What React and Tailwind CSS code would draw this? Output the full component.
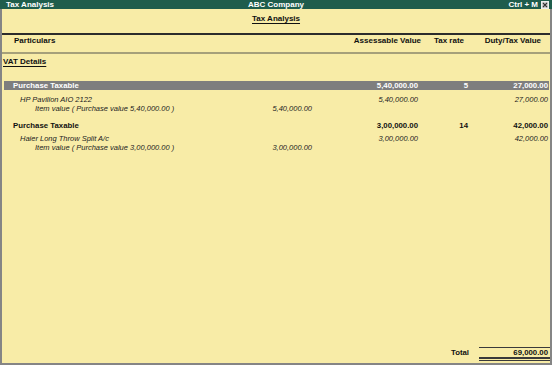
import React from "react";

const FONT = { fontFamily: '"Liberation Sans", Arial, sans-serif' };

function Cells({ a, r, d }) {
  return (
    <>
      <div className="w-[100px] shrink-0 text-right pr-[3px]">{a}</div>
      <div className="w-[47px] shrink-0 text-right">{r}</div>
      <div className="w-[80px] shrink-0 text-right">{d}</div>
    </>
  );
}

function CloseIcon() {
  return (
    <svg width="8" height="8" viewBox="0 0 8 8" className="block">
      <rect x="0.5" y="0.5" width="7" height="7" fill="#d0d0d0" stroke="#eeeeee" strokeWidth="1" />
      <path d="M2 2 L6 6 M6 2 L2 6" stroke="#333" strokeWidth="1.1" />
    </svg>
  );
}

export default function App() {
  return (
    <div
      style={FONT}
      className="w-[552px] h-[365px] flex flex-col overflow-hidden bg-[#f8eca7] text-[#111111]"
    >
      {/* Title bar */}
      <div className="h-[9px] shrink-0 bg-[#1f5d4c] text-white text-[8px] font-bold leading-[9px] relative flex items-center">
        <span className="pl-[6px]">Tax Analysis</span>
        <span className="absolute left-0 right-0 text-center pointer-events-none">ABC Company</span>
        <div className="ml-auto flex items-center gap-[3px] pr-[3px]">
          <span>Ctrl + M</span>
          <CloseIcon />
        </div>
      </div>

      {/* Body */}
      <div className="flex-1 flex flex-col border-l-2 border-r-2 border-b-2 border-[#858585] text-[8px]">
        {/* Report title */}
        <div className="h-[24px] shrink-0 pt-[5px] leading-[9px] text-center font-bold">
          <span className="underline underline-offset-[1.5px]">Tax Analysis</span>
        </div>

        {/* Column header */}
        <div className="flex pr-[2px] h-[21px] pt-[1px] leading-[9px] font-bold border-t-2 border-b-2 border-t-[#2c2c2c] border-b-[#a6a07a]">
          <div className="flex-1 pl-[12px]">Particulars</div>
          <div className="w-[100px] shrink-0 text-right">Assessable Value</div>
          <div className="w-[47px] shrink-0 text-right pr-[4px]">Tax rate</div>
          <div className="w-[80px] shrink-0 text-right pr-[7px]">Duty/Tax Value</div>
        </div>

        {/* VAT Details */}
        <div className="pt-[3px] pl-[1px] leading-[9px] font-bold">
          <span className="underline underline-offset-[1.5px]">VAT Details</span>
        </div>

        {/* Highlighted row */}
        <div className="mt-[15px] ml-[2px] mr-[1px] h-[9px] leading-[9px] bg-[#7e7e7e] text-white font-bold flex pr-[1px] text-[7.8px]">
          <div className="flex-1 pl-[9px]">Purchase Taxable</div>
          <Cells a="5,40,000.00" r="5" d="27,000.00" />
        </div>

        {/* HP Pavilion */}
        <div className="mt-[6px] flex pr-[2px] leading-[8px] italic text-[#222222] text-[7.5px]">
          <div className="flex-1 pl-[18px]">HP Pavilion AIO 2122</div>
          <Cells a="5,40,000.00" r="" d="27,000.00" />
        </div>
        <div className="flex leading-[9px] italic text-[#222222] text-[7.5px]">
          <div className="w-[310px] flex justify-between">
            <span className="pl-[33px]">Item value ( Purchase value 5,40,000.00 )</span>
            <span>5,40,000.00</span>
          </div>
        </div>

        {/* Purchase Taxable (bold) */}
        <div className="mt-[8px] flex pr-[2px] leading-[10px] font-bold text-[7.8px]">
          <div className="flex-1 pl-[11px]">Purchase Taxable</div>
          <Cells a="3,00,000.00" r="14" d="42,000.00" />
        </div>

        {/* Haier */}
        <div className="mt-[4px] flex pr-[2px] leading-[8px] italic text-[#222222] text-[7.5px]">
          <div className="flex-1 pl-[18px]">Haier Long Throw Split A/c</div>
          <Cells a="3,00,000.00" r="" d="42,000.00" />
        </div>
        <div className="flex leading-[9px] italic text-[#222222] text-[7.5px]">
          <div className="w-[310px] flex justify-between">
            <span className="pl-[33px]">Item value ( Purchase value 3,00,000.00 )</span>
            <span>3,00,000.00</span>
          </div>
        </div>

        {/* Total */}
        <div className="mt-auto flex justify-end items-start pb-[2px] text-[7.8px]">
          <div className="pt-[1px] leading-[9px] font-bold pr-[10px]">Total</div>
          <div className="w-[71px] flex flex-col">
            <div className="h-[1px] bg-[#3a3a3a]" />
            <div className="leading-[9px] font-bold text-right pr-[2px]">69,000.00</div>
            <div className="h-[2px] bg-[#3a3a3a]" />
            <div className="h-[1px]" />
            <div className="h-[1px] bg-[#3a3a3a]" />
          </div>
        </div>
      </div>
    </div>
  );
}
